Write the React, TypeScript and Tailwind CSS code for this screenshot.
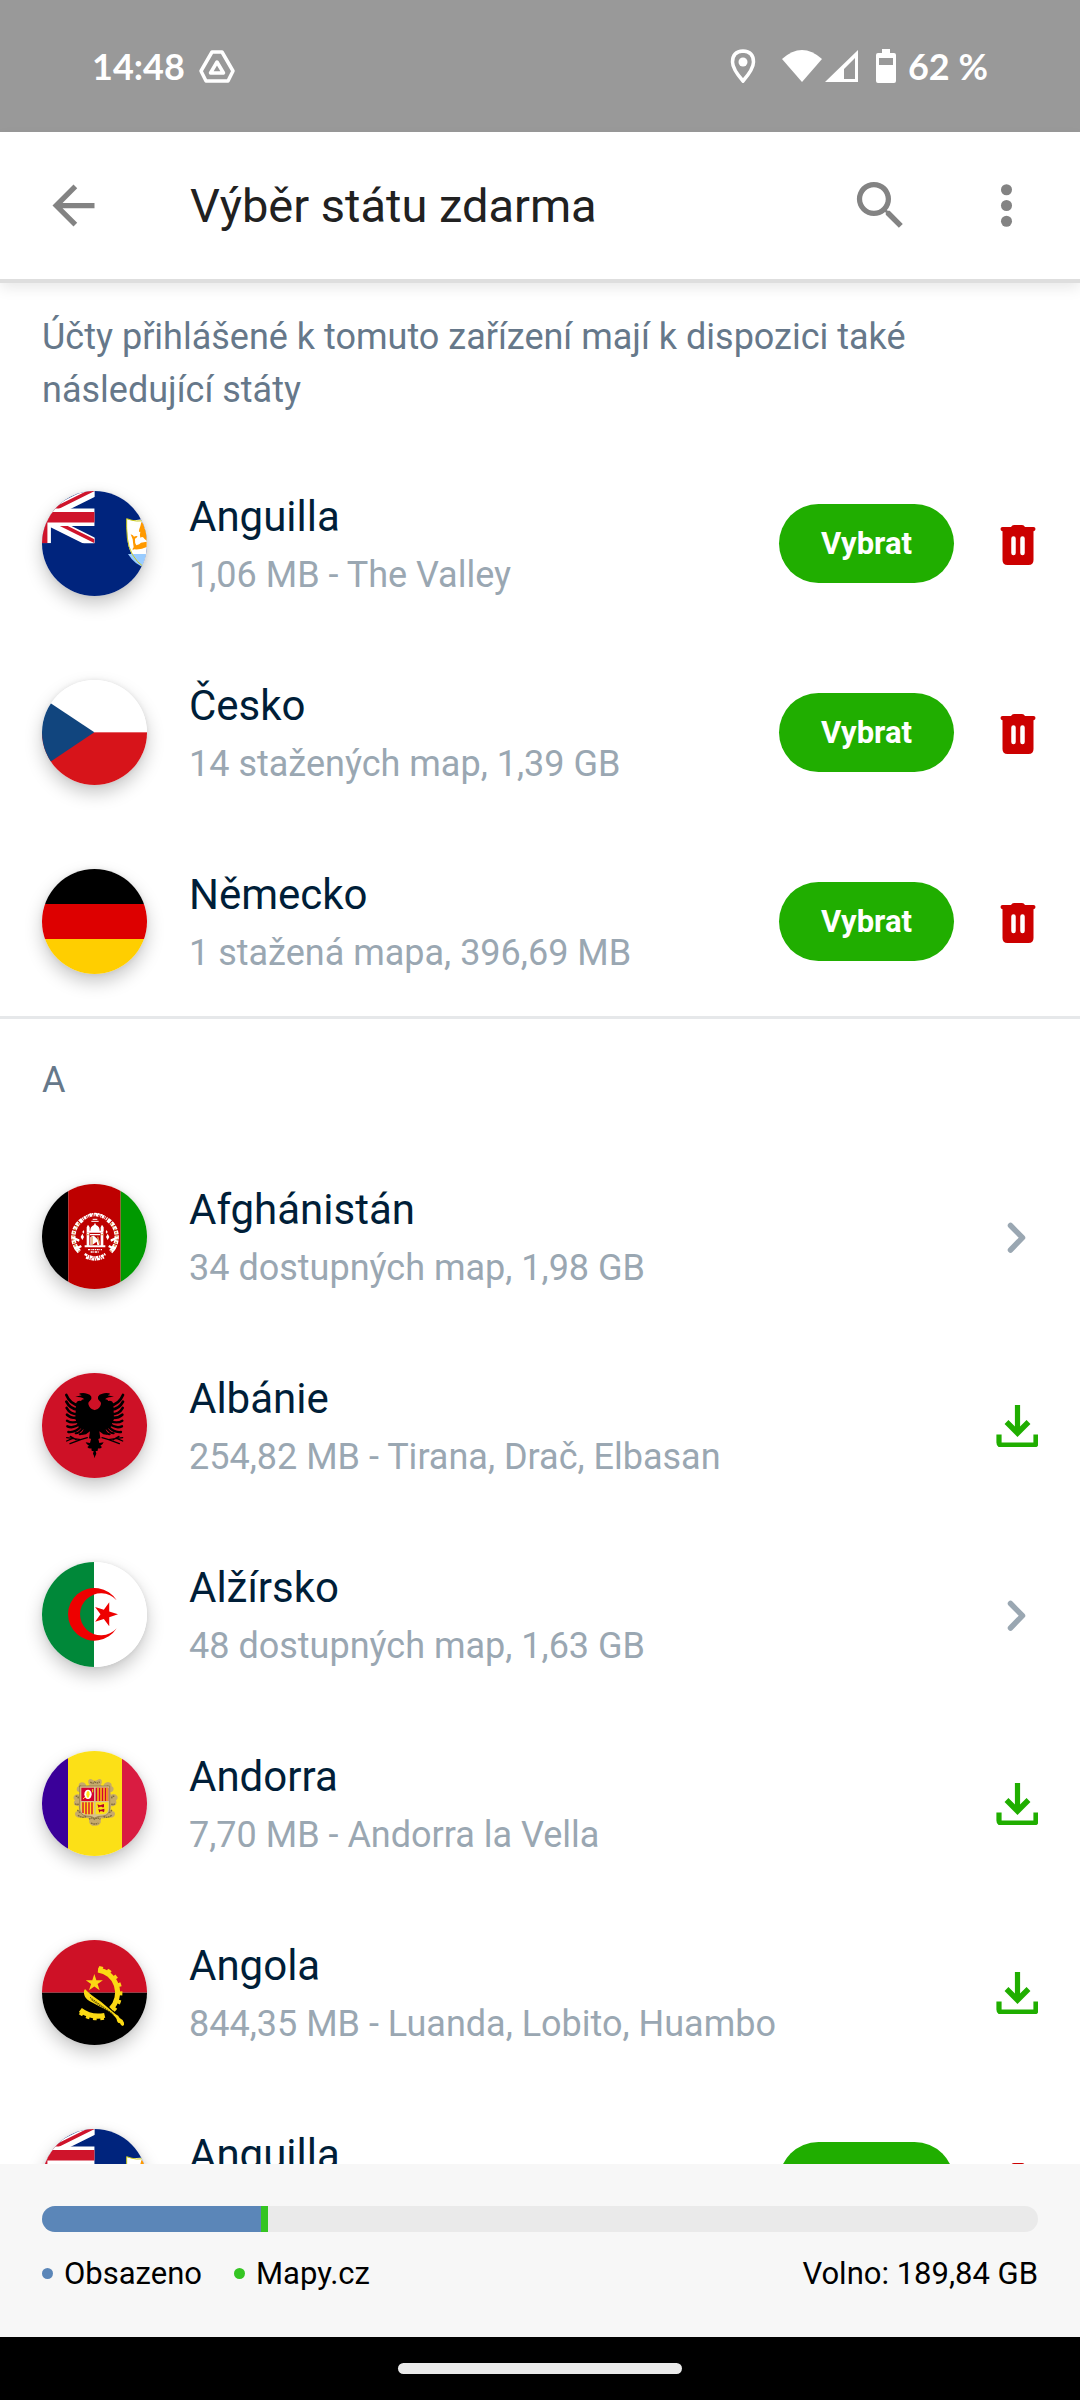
import type { ReactNode } from "react";

type FlagCode = "ai" | "cz" | "de" | "af" | "al" | "dz" | "ad" | "ao";
type RowAction = "select" | "open" | "download";

type Country = {
  id: string;
  name: string;
  detail: string;
  flag: FlagCode;
  action: RowAction;
};

const ownedCountries: Country[] = [
  { id: "own-ai", name: "Anguilla", detail: "1,06 MB - The Valley", flag: "ai", action: "select" },
  { id: "own-cz", name: "Česko", detail: "14 stažených map, 1,39 GB", flag: "cz", action: "select" },
  { id: "own-de", name: "Německo", detail: "1 stažená mapa, 396,69 MB", flag: "de", action: "select" },
];

const countriesA: Country[] = [
  { id: "af", name: "Afghánistán", detail: "34 dostupných map, 1,98 GB", flag: "af", action: "open" },
  { id: "al", name: "Albánie", detail: "254,82 MB - Tirana, Drač, Elbasan", flag: "al", action: "download" },
  { id: "dz", name: "Alžírsko", detail: "48 dostupných map, 1,63 GB", flag: "dz", action: "open" },
  { id: "ad", name: "Andorra", detail: "7,70 MB - Andorra la Vella", flag: "ad", action: "download" },
  { id: "ao", name: "Angola", detail: "844,35 MB - Luanda, Lobito, Huambo", flag: "ao", action: "download" },
  { id: "ai", name: "Anguilla", detail: "1,06 MB - The Valley", flag: "ai", action: "select" },
];

const storage = { usedPercent: 22, mapsPercent: 0.7, free: "189,84 GB" };

function starPoints(cx: number, cy: number, r: number, startDeg: number) {
  return Array.from({ length: 10 }, (_, i) => {
    const radius = i % 2 === 0 ? r : r * 0.382;
    const a = ((startDeg + i * 36) * Math.PI) / 180;
    return `${(cx + radius * Math.cos(a)).toFixed(1)},${(cy + radius * Math.sin(a)).toFixed(1)}`;
  }).join(" ");
}

function AnguillaFlag() {
  return (
    <>
      <rect width="315" height="315" fill="#00247d" />
      <svg x="-157" y="0" width="315" height="157" viewBox="0 0 60 30" preserveAspectRatio="none">
        <clipPath id="union-saltire">
          <path d="M30 15h30v15zv15H30zH0V15zV0h30z" />
        </clipPath>
        <path d="M0 0l60 30M60 0L0 30" stroke="#fff" strokeWidth="6" />
        <path d="M0 0l60 30M60 0L0 30" stroke="#cf142b" strokeWidth="4" clipPath="url(#union-saltire)" />
        <path d="M30 0v30M0 15h60" stroke="#fff" strokeWidth="10" />
        <path d="M30 0v30M0 15h60" stroke="#cf142b" strokeWidth="6" />
      </svg>
      <path d="M254 83q14 6 30 4t36-4v140q-6 8-16 5-46-32-48-90-2-30-2-55z" fill="#fff" />
      <path d="M258 189h60v44q-38-8-60-44z" fill="#9cf" />
      <path d="M320 86q-22 5-36 4t-30-7q-1 26 2 58 6 56 50 88" fill="none" stroke="#c9c91c" strokeWidth="3" />
      <path
        d="M298 93q8 4 10 20l6 4v32l-7-6q-4-8-12-3-3-6 0-18-6 3-3-8 4-10 6-21zM266 130q8 2 10 7 6-3 11-1-3 5-8 7-1 14 4 20 10-3 14-8l17-3v16q-16 9-38 7l-4 3q-1-6 3-9-2-14-3-24l-6-15z"
        fill="#ff9900"
      />
    </>
  );
}

function AfghanFlag() {
  return (
    <>
      <rect width="79" height="315" fill="#000" />
      <rect x="79" width="157" height="315" fill="#be0000" />
      <rect x="236" width="79" height="315" fill="#009900" />
      <g fill="none" stroke="#fff">
        <path d="M121 107a63 63 0 0 0-9 96M197 107a63 63 0 0 1 9 96" strokeWidth="13" strokeDasharray="11 3" />
        <path d="M112 118a58 58 0 0 0 0 84M206 118a58 58 0 0 1 0 84" stroke="#d99a55" strokeWidth="6" strokeDasharray="5 5" />
        <path d="M122 106q36-28 74 0" strokeWidth="10" strokeDasharray="3 2 7 2 2 3" />
        <path d="M133 96q26-14 53 0" strokeWidth="5" strokeDasharray="4 3 8 3" />
        <path d="M94 162l18 8M224 162l-18 8M98 196l20-10M220 196l-20-10" strokeWidth="7" />
        <path d="M128 210q31 20 62 0M132 220q27 13 54 0" strokeWidth="7" strokeDasharray="9 2 4 2" />
        <path d="M110 161l20 28 58 0 20-28" stroke="#be0000" strokeWidth="2" />
        <path d="M148 112h22M152 106h14" strokeWidth="3" />
      </g>
      <g fill="#fff">
        <path d="M159 116l3 7q12 5 11 18h-28q-1-13 11-18zM134 140h50v6h-50zM138 122l5 8v12h-9v-12zM180 122l5 8v12h-9v-12z" />
        <path d="M134 146h8v38h-8zM176 146h8v38h-8zM128 184h62v6h-62zM144 150h30v4h-30z" />
        <path d="M145 160q8-8 14-2t13 12v13h-6l-2-10-10 8-9 2z" />
        <path d="M121 149l5 10-5 9-5-9zM197 149l5 10-5 9-5-9zM124 138l3 6-3 5-3-5zM194 138l3 6-3 5-3-5z" />
      </g>
      <path d="M150 158v24M167 158l5 20M134 152h6M178 152h6" stroke="#d99a55" strokeWidth="4" />
      <path d="M138 197h42M146 204h26" stroke="#fff" strokeWidth="4" strokeDasharray="6 2 3 2" />
    </>
  );
}

function EagleHalf() {
  return (
    <g>
      <path d="M159 112l-10-4q-10-7-10-17 0-5 5-8 6-5 4-12-3-8-13-9-9-3-20-1l-4 2 8 4-19 4 15 2q8 1 12 6-8-1-10 5-12-3-15 9l-2 45 10 24q10 8 20 9l-11 15 13-2 12-9-3 21 18 6z" />
      <path d="M159 190l-11 4-4 16-13-2q3 8 10 10l-5 4q5 6 12 4l1 7q3 2 6 1l-2 8 6 13z" />
      <g fill="none" stroke="#000" strokeLinecap="round">
        <path d="M112 98Q84 93 73 66" strokeWidth="8" />
        <path d="M108 110Q84 108 73 86" strokeWidth="8" />
        <path d="M108 124Q84 124 74 105" strokeWidth="8" />
        <path d="M110 134Q88 137 75 125" strokeWidth="8" />
        <path d="M112 144Q90 153 75 143" strokeWidth="7" />
        <path d="M114 152Q94 168 76 160" strokeWidth="7" />
        <path d="M118 160Q100 180 79 177" strokeWidth="7" />
        <path d="M122 166Q110 182 101 181" strokeWidth="6" />
        <path d="M128 170Q122 184 113 184" strokeWidth="6" />
        <path d="M136 194l-20 6-42-6M116 200l-32 12M102 200l-17-10M92 196l-18 8" strokeWidth="4" />
      </g>
    </g>
  );
}

function AlbaniaFlag() {
  return (
    <>
      <rect width="315" height="315" fill="#ce1126" />
      <EagleHalf />
      <g transform="translate(316 0) scale(-1 1)">
        <EagleHalf />
      </g>
    </>
  );
}

function AndorraFlag() {
  return (
    <>
      <rect width="78" height="315" fill="#3a0099" />
      <rect x="78" width="162" height="315" fill="#fce017" />
      <rect x="240" width="75" height="315" fill="#d91c41" />
      <path
        d="M139 88q6-7 13-1 7 5 14 0 8-6 13 1 2 7-3 14l8 4q2-12 14-13 12 1 11 13 8 3 5 12-3 6-9 6l1 7q14-5 20 5 3 8-4 12 4 8-2 14-6 5-13 3l-1 14 11 3q4 6 0 13-6 7-16 4-14 4-24 3l-1 13q-6 12-17 9-12 2-17-9l-1-13-24-3q-10 3-16-4-4-7 0-13l10-3-1-14q-11 1-14-6-2-7 3-11-7-5-3-13 6-8 17-4l1-8q-9 1-10-8 0-7 6-9-1-10 9-12 12 0 14 12l10-4q-6-7-4-15z"
        fill="#c6aa6c"
      />
      <path
        d="M145 93q7 7 13 0 8 6 15-1M111 107q7-4 8 4M199 107q-3-4-8 4M101 136q8-2 8 7M217 136q-8-2-8 7M99 158q8 6 12-2M219 158q-8 6-12-2M108 193q12 10 25 3M209 193q-12 10-25 3M141 205q8-8 17 0 9-8 17 0M147 216q11 6 22 0M106 177l8 8M210 177l-8 8"
        fill="none"
        stroke="#7d6a3a"
        strokeWidth="4"
        strokeDasharray="5 2"
      />
      <path d="M113 105h90v66q0 22-20 24-17 0-25 6-8-6-25-6-20-3-20-24z" fill="#d7c18c" stroke="#85703c" strokeWidth="2" />
      <path d="M118 110h38v40h-38z" fill="#d50032" />
      <path d="M161 110h38v40h-38z" fill="#d50032" />
      <path d="M118 154h38v36h-20q-18 0-18-18z" fill="#fce017" />
      <path d="M161 154h38v18q0 18-18 18h-20z" fill="#fce017" />
      <ellipse cx="138" cy="130" rx="11" ry="14" fill="#fff" />
      <path d="M138 119q6 2 5 11t-5 11q-5-2-5-11t5-11z" fill="#fce017" />
      <path d="M123 144l6-6M152 114v10" stroke="#fce017" strokeWidth="3" />
      <path d="M168 110v40M177 110v40M186 110v40M195 110v40" stroke="#fce017" strokeWidth="4" />
      <path d="M123 154v32M132 154v36M141 154v36M150 154v36" stroke="#d50032" strokeWidth="4" />
      <path d="M166 160l8 3 12-4v8l-3 3-3-3h-7l-3 4zM169 174l7 2 11-3v8l-3 3-3-3h-6l-3 4z" fill="#b5002a" />
    </>
  );
}

function AngolaFlag() {
  return (
    <>
      <rect width="315" height="158" fill="#ce1126" />
      <rect y="158" width="315" height="157" fill="#000" />
      <g fill="none" stroke="#fbd914">
        <path d="M168 90A66 68 0 0 1 207 206" strokeWidth="15" />
        <path d="M171 83A76 76 0 0 1 214 212" strokeWidth="10" strokeDasharray="12 14" />
        <path d="M188 226Q148 235 115 210" strokeWidth="15" />
        <path d="M186 235Q146 243 110 218" strokeWidth="8" strokeDasharray="11 11" />
      </g>
      <polygon points={starPoints(157, 129, 27, -90)} fill="#fbd914" />
      <path
        d="M129 147q-5 5-3 14 2 13 16 22l55 29q12 7 22 18 6 6 6 13 2 7 9 7 2 6 8 8 6-2 4-10-2-9-13-14-3-8-12-11l-44-38q-34-22-48-38z"
        fill="#fbd914"
      />
      <path d="M144 172l70 51M148 179l66 47" stroke="#000" strokeWidth="2" strokeDasharray="5 2" />
    </>
  );
}

const flagArt: Record<FlagCode, ReactNode> = {
  ai: <AnguillaFlag />,
  cz: (
    <>
      <rect width="315" height="158" fill="#fff" />
      <rect y="157" width="315" height="158" fill="#d7141a" />
      <path d="M-79 0L157 157-79 315z" fill="#11457e" />
    </>
  ),
  de: (
    <>
      <rect width="315" height="105" fill="#000" />
      <rect y="105" width="315" height="105" fill="#d00" />
      <rect y="210" width="315" height="105" fill="#ffce00" />
    </>
  ),
  af: <AfghanFlag />,
  al: <AlbaniaFlag />,
  dz: (
    <>
      <rect width="156" height="315" fill="#008839" />
      <rect x="156" width="159" height="315" fill="#fff" />
      <path d="M224 115A79 79 0 1 0 224 199A63 63 0 1 1 224 115z" fill="#ee0000" />
      <polygon points={starPoints(190, 157, 38, 0)} fill="#ee0000" />
    </>
  ),
  ad: <AndorraFlag />,
  ao: <AngolaFlag />,
};

function Flag({ code }: { code: FlagCode }) {
  return (
    <span className="block size-[105px] shrink-0 overflow-hidden rounded-full shadow-[0_8px_18px_rgba(0,0,0,0.22),0_0_5px_rgba(0,0,0,0.08)]">
      <svg viewBox="0 0 315 315" className="block size-full" aria-hidden="true">
        {flagArt[code]}
      </svg>
    </span>
  );
}

function TrashIcon() {
  return (
    <svg viewBox="0 0 42 42" className="size-[42px]" aria-hidden="true">
      <path
        d="M15 4q1-2 3-2h8q2 0 3 2h8.500q2 0 2 2t-2 2.300V37q0 5-5 5H11.500q-5 0-5-5V8.300q-2-.300-2-2.300t2-2z"
        fill="#cc0000"
      />
      <path d="M17.500 15.500v14.500M26.500 15.500v14.500" stroke="#fff" strokeWidth="4.500" strokeLinecap="round" />
    </svg>
  );
}

function DownloadIcon() {
  return (
    <svg viewBox="0 0 42 42" className="size-[42px]" fill="none" stroke="#20ae00" strokeWidth="5.200" aria-hidden="true">
      <path d="M21.500 0v28" />
      <path d="M10.500 17L21.500 28 32.500 17" strokeWidth="5.500" />
      <path d="M3 29.500v8q0 2.500 2.500 2.500h32q2.500 0 2.500-2.500v-8" />
    </svg>
  );
}

function ChevronIcon() {
  return (
    <svg viewBox="0 0 42 42" className="size-[42px]" fill="none" aria-hidden="true">
      <path d="M14.500 9.500L26.500 21.700 14.500 34" stroke="#9aa7b2" strokeWidth="5.500" strokeLinecap="round" strokeLinejoin="round" />
    </svg>
  );
}

function CountryRow({ country }: { country: Country }) {
  return (
    <li className="flex items-center gap-[42px] px-[42px] py-[42px]">
      <Flag code={country.flag} />
      <div className="min-w-0 flex-1">
        <h3 className="text-[42px] leading-[50px] text-[#001e38]">{country.name}</h3>
        <p className="mt-3 text-[36px] leading-[42px] text-[#9aa7b2]">{country.detail}</p>
      </div>
      {country.action === "select" && (
        <>
          <button
            type="button"
            className="rounded-full bg-[#20ae00] px-[42px] py-[18px] text-[31px] leading-[43px] font-bold text-white"
          >
            Vybrat
          </button>
          <button type="button" aria-label={`Smazat ${country.name}`}>
            <TrashIcon />
          </button>
        </>
      )}
      {country.action === "download" && (
        <button type="button" aria-label={`Stáhnout ${country.name}`}>
          <DownloadIcon />
        </button>
      )}
      {country.action === "open" && (
        <button type="button" aria-label={`Otevřít ${country.name}`}>
          <ChevronIcon />
        </button>
      )}
    </li>
  );
}

function StatusBar() {
  return (
    <div className="flex h-[132px] shrink-0 items-center justify-between bg-[#999] px-[92px] font-['Lato','Roboto',sans-serif] text-[36px] leading-[44px] font-bold text-white">
      <div className="flex items-center gap-[14px]">
        <span>14:48</span>
        <svg viewBox="0 0 36 34" className="h-[34px] w-[36px]" fill="none" stroke="#fff" strokeWidth="3.500" strokeLinejoin="round" aria-hidden="true">
          <path d="M13 3h10l11 19-5 10H7L2 22z" />
          <path d="M18 13l6.500 11h-13z" />
        </svg>
      </div>
      <div className="flex items-center">
        <svg viewBox="0 0 26 34" className="mr-[26px] h-[34px] w-[26px]" aria-hidden="true">
          <path d="M13 2q10.500.500 10.500 11Q23.500 20 13 32 2.500 20 2.500 13 2.500 2.500 13 2z" fill="none" stroke="#fff" strokeWidth="3.500" />
          <circle cx="13" cy="13" r="4.500" fill="#fff" />
        </svg>
        <svg viewBox="0 0 40 32" className="h-8 w-10" aria-hidden="true">
          <path d="M0 9Q20-9 40 9L20 32z" fill="#fff" />
        </svg>
        <svg viewBox="0 0 33 32" className="ml-[3px] h-8 w-[33px]" aria-hidden="true">
          <path fillRule="evenodd" d="M33 0v32H0zM30 8L19 19v10h11z" fill="#fff" />
        </svg>
        <svg viewBox="0 0 20 34" className="mr-3 ml-[18px] h-[34px] w-5" aria-hidden="true">
          <path fillRule="evenodd" d="M6 0h8v4h4q2 0 2 2v26q0 2-2 2H2q-2 0-2-2V6q0-2 2-2h4zM3 9v7h14V9z" fill="#fff" />
        </svg>
        <span>62 %</span>
      </div>
    </div>
  );
}

function AppBar() {
  return (
    <header className="relative z-10 flex shrink-0 items-center bg-white px-[42px] py-[42px] text-[#838383] shadow-[0_4px_0_#dedede,0_8px_14px_rgba(0,0,0,0.1)]">
      <button type="button" aria-label="Zpět">
        <svg viewBox="0 0 24 24" className="size-[63px]" fill="currentColor" aria-hidden="true">
          <path d="M20 11H7.830l5.590-5.590L12 4l-8 8 8 8 1.410-1.410L7.830 13H20v-2z" />
        </svg>
      </button>
      <h1 className="ml-[85px] flex-1 text-[47px] leading-[60px] text-[#212121]">Výběr státu zdarma</h1>
      <button type="button" aria-label="Hledat">
        <svg viewBox="0 0 24 24" className="size-[63px]" fill="currentColor" aria-hidden="true">
          <path d="M15.500 14h-.790l-.280-.270A6.470 6.470 0 0 0 16 9.500 6.500 6.500 0 1 0 9.500 16c1.610 0 3.090-.590 4.230-1.570l.270.280v.790l5 4.990L20.490 19l-4.990-5zm-6 0C7.010 14 5 11.990 5 9.500S7.010 5 9.500 5 14 7.010 14 9.500 11.990 14 9.500 14z" />
        </svg>
      </button>
      <button type="button" aria-label="Další možnosti" className="ml-[63px]">
        <svg viewBox="0 0 24 24" className="size-[63px]" fill="currentColor" aria-hidden="true">
          <circle cx="12" cy="6" r="2.100" />
          <circle cx="12" cy="12" r="2.100" />
          <circle cx="12" cy="18" r="2.100" />
        </svg>
      </button>
    </header>
  );
}

function StorageFooter() {
  return (
    <footer className="shrink-0 bg-[#f7f7f7] px-[42px] pt-[42px] pb-[42px] text-[31px] leading-[43px] text-black">
      <div className="flex h-[26px] overflow-hidden rounded-full bg-[#eaeaea]">
        <div className="bg-[#5b86b8]" style={{ width: `${storage.usedPercent}%` }} />
        <div className="bg-[#35c523]" style={{ width: `${storage.mapsPercent}%` }} />
      </div>
      <div className="mt-5 flex items-center gap-8">
        <span className="flex items-center gap-[11px]">
          <span className="size-[11px] rounded-full bg-[#5b86b8]" />
          Obsazeno
        </span>
        <span className="flex items-center gap-[11px]">
          <span className="size-[11px] rounded-full bg-[#35c523]" />
          Mapy.cz
        </span>
        <span className="ml-auto">Volno: {storage.free}</span>
      </div>
    </footer>
  );
}

export default function App() {
  return (
    <div className="flex h-screen flex-col overflow-hidden bg-white font-['Roboto',sans-serif]">
      <StatusBar />
      <AppBar />
      <main className="min-h-0 flex-1 overflow-y-auto [scrollbar-width:none]">
        <p className="px-[42px] py-8 text-[36px] leading-[53px] text-[#66788a]">
          Účty přihlášené k tomuto zařízení mají k dispozici také následující státy
        </p>
        <ul>
          {ownedCountries.map((c) => (
            <CountryRow key={c.id} country={c} />
          ))}
        </ul>
        <section className="border-t-[3px] border-[#e6e8ea]">
          <h2 className="px-[42px] py-10 text-[36px] leading-[43px] text-[#66788a]">A</h2>
          <ul>
            {countriesA.map((c) => (
              <CountryRow key={c.id} country={c} />
            ))}
          </ul>
        </section>
      </main>
      <StorageFooter />
      <div className="flex shrink-0 justify-center bg-black py-[26px]">
        <div className="h-[11px] w-[284px] rounded-full bg-[#eaeaea]" />
      </div>
    </div>
  );
}
